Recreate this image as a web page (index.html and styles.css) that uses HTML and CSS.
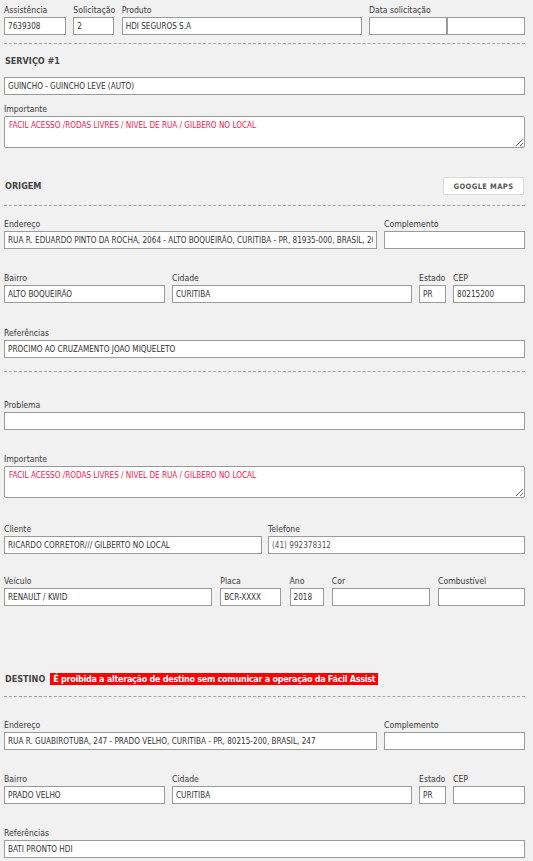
FILE: index.html
```html
<!DOCTYPE html>
<html lang="pt-BR">
<head>
<meta charset="utf-8">
<title>Serviço</title>
<link rel="stylesheet" href="styles.css">
</head>
<body>
<div class="page">
  <div class="row r-top">
    <div class="field w-assist"><label>Assistência</label><input type="text" value="7639308"></div>
    <div class="field w-solic"><label>Solicitação</label><input type="text" value="2"></div>
    <div class="field w-prod"><label>Produto</label><input type="text" value="HDI SEGUROS S.A"></div>
    <div class="field w-data"><label>Data solicitação</label>
      <div class="pair"><input type="text" value=""><input type="text" value=""></div>
    </div>
  </div>
  <hr class="dash d1">

  <h2 class="heading h-serv">SERVIÇO #1</h2>
  <input class="full i-guincho" type="text" value="GUINCHO - GUINCHO LEVE (AUTO)">
  <div class="field r-imp1"><label>Importante</label><textarea class="imp">FACIL ACESSO /RODAS LIVRES / NIVEL DE RUA / GILBERO NO LOCAL</textarea></div>

  <div class="head-row hr-origem">
    <h2 class="heading">ORIGEM</h2>
    <button class="maps" type="button">GOOGLE MAPS</button>
  </div>
  <hr class="dash d2">

  <div class="row r-end1">
    <div class="field w-end"><label>Endereço</label><input type="text" value="RUA R. EDUARDO PINTO DA ROCHA, 2064 - ALTO BOQUEIRÃO, CURITIBA - PR, 81935-000, BRASIL, 2064"></div>
    <div class="field w-comp"><label>Complemento</label><input type="text" value=""></div>
  </div>
  <div class="row r-next">
    <div class="field w-bairro"><label>Bairro</label><input type="text" value="ALTO BOQUEIRÃO"></div>
    <div class="field w-cidade"><label>Cidade</label><input type="text" value="CURITIBA"></div>
    <div class="field w-estado"><label>Estado</label><input type="text" value="PR"></div>
    <div class="field w-cep"><label>CEP</label><input type="text" value="80215200"></div>
  </div>
  <div class="row r-ref1">
    <div class="field w-full"><label>Referências</label><input type="text" value="PROCIMO AO CRUZAMENTO JOAO MIQUELETO"></div>
  </div>
  <hr class="dash d3">

  <div class="row r-prob">
    <div class="field w-full"><label>Problema</label><input type="text" value=""></div>
  </div>
  <div class="row r-imp2">
    <div class="field w-full"><label>Importante</label><textarea class="imp">FACIL ACESSO /RODAS LIVRES / NIVEL DE RUA / GILBERO NO LOCAL</textarea></div>
  </div>
  <div class="row r-cli">
    <div class="field w-cli"><label>Cliente</label><input type="text" value="RICARDO CORRETOR/// GILBERTO NO LOCAL"></div>
    <div class="field w-tel"><label>Telefone</label><input class="tel" type="text" value="(41) 992378312"></div>
  </div>
  <div class="row r-vei">
    <div class="field w-vei"><label>Veículo</label><input type="text" value="RENAULT / KWID"></div>
    <div class="field w-placa"><label>Placa</label><input type="text" value="BCR-XXXX"></div>
    <div class="field w-ano"><label>Ano</label><input type="text" value="2018"></div>
    <div class="field w-cor"><label>Cor</label><input type="text" value=""></div>
    <div class="field w-comb"><label>Combustível</label><input type="text" value=""></div>
  </div>

  <div class="head-row hr-destino">
    <h2 class="heading">DESTINO</h2>
    <span class="alert">É proibida a alteração de destino sem comunicar a operação da Fácil Assist</span>
  </div>
  <hr class="dash d4">

  <div class="row r-end2">
    <div class="field w-end"><label>Endereço</label><input type="text" value="RUA R. GUABIROTUBA, 247 - PRADO VELHO, CURITIBA - PR, 80215-200, BRASIL, 247"></div>
    <div class="field w-comp"><label>Complemento</label><input type="text" value=""></div>
  </div>
  <div class="row r-next">
    <div class="field w-bairro"><label>Bairro</label><input type="text" value="PRADO VELHO"></div>
    <div class="field w-cidade"><label>Cidade</label><input type="text" value="CURITIBA"></div>
    <div class="field w-estado"><label>Estado</label><input type="text" value="PR"></div>
    <div class="field w-cep"><label>CEP</label><input type="text" value=""></div>
  </div>
  <div class="row r-next">
    <div class="field w-full"><label>Referências</label><input type="text" value="BATI PRONTO HDI"></div>
  </div>
</div>
</body>
</html>
```

FILE: styles.css
```css
* { box-sizing: border-box; }
html, body { margin: 0; padding: 0; background: #f1f1f1; }
body {
  font-family: "DejaVu Sans Condensed", "DejaVu Sans", sans-serif;
  font-stretch: condensed;
  color: #333;
  overflow: hidden;
}
.page {
  width: 521px;
  margin-left: 4px;
  padding-top: 1px;
}
.row {
  display: flex;
  justify-content: space-between;
}
.field { display: flex; flex-direction: column; }
.field label {
  display: block;
  font-size: 8.6px;
  line-height: 14px;
  height: 16px;
  padding-top: 2px;
  margin-bottom: 0;
  color: #3a3a3a;
  white-space: nowrap;
}
input, textarea {
  font-family: inherit;
  font-stretch: condensed;
  font-size: 8.1px;
  color: #333;
  background: #fff;
  border: 1px solid #9a9a9a;
  margin: 0;
  outline: none;
}
input {
  height: 18px;
  width: 100%;
  padding: 0 3px;
  border-radius: 0;
}
textarea {
  width: 100%;
  height: 32px;
  padding: 3px 4px;
  border-radius: 2px;
  resize: vertical;
  display: block;
}
textarea.imp { color: #f5204f; }
input.tel { color: #555; }
.pair { display: flex; }
.pair input { width: 78px; }

.w-assist { width: 62px; }
.w-solic { width: 41px; }
.w-prod { width: 240px; }
.w-data { width: 156px; }
.w-end { width: 373px; }
.w-comp { width: 141px; }
.w-bairro { width: 161px; }
.w-cidade { width: 240px; }
.w-estado { width: 27px; }
.w-cep { width: 72px; }
.w-full { width: 521px; }
.w-cli { width: 258px; }
.w-tel { width: 257px; }
.w-vei { width: 208px; }
.w-placa { width: 61px; }
.w-ano { width: 34px; }
.w-cor { width: 98px; }
.w-comb { width: 87px; }

.dash {
  border: 0;
  border-top: 1px dashed #a8a8a8;
  height: 0;
  margin: 0;
}
.d1 { margin-top: 8px; }
.d2 { margin-top: 10px; }
.d3 { margin-top: 13px; }
.d4 { margin-top: 8px; }

.heading {
  font-size: 9px;
  line-height: 14px;
  font-weight: bold;
  color: #444;
  margin: 0;
  padding-left: 1px;
}
.h-serv { margin-top: 10px; }
.full { display: block; width: 521px; }
.i-guincho { margin-top: 9px; }
.r-imp1 { margin-top: 5px; }

.head-row {
  display: flex;
  align-items: center;
  height: 18px;
}
.hr-origem { margin-top: 29px; justify-content: space-between; }
.maps {
  width: 81px;
  height: 18px;
  background: #fff;
  border: 1px solid #dcdcdc;
  font-family: inherit;
  font-stretch: condensed;
  font-size: 7.5px;
  font-weight: bold;
  letter-spacing: 0.4px;
  color: #555;
  padding: 0;
  margin-right: 1px;
}
.hr-destino { margin-top: 64px; }
.alert {
  margin-left: 5px;
  background: #ff0000;
  color: #fff;
  font-weight: bold;
  font-size: 9px;
  letter-spacing: -0.3px;
  line-height: 12px;
  padding: 0 3px;
  white-space: nowrap;
}

.r-end1 { margin-top: 9px; }
.r-end2 { margin-top: 19px; }
.r-next { margin-top: 20px; }
.r-ref1 { margin-top: 21px; }
.r-prob { margin-top: 24px; }
.r-imp2 { margin-top: 20px; }
.r-cli { margin-top: 22px; }
.r-vei { margin-top: 18px; }
```
